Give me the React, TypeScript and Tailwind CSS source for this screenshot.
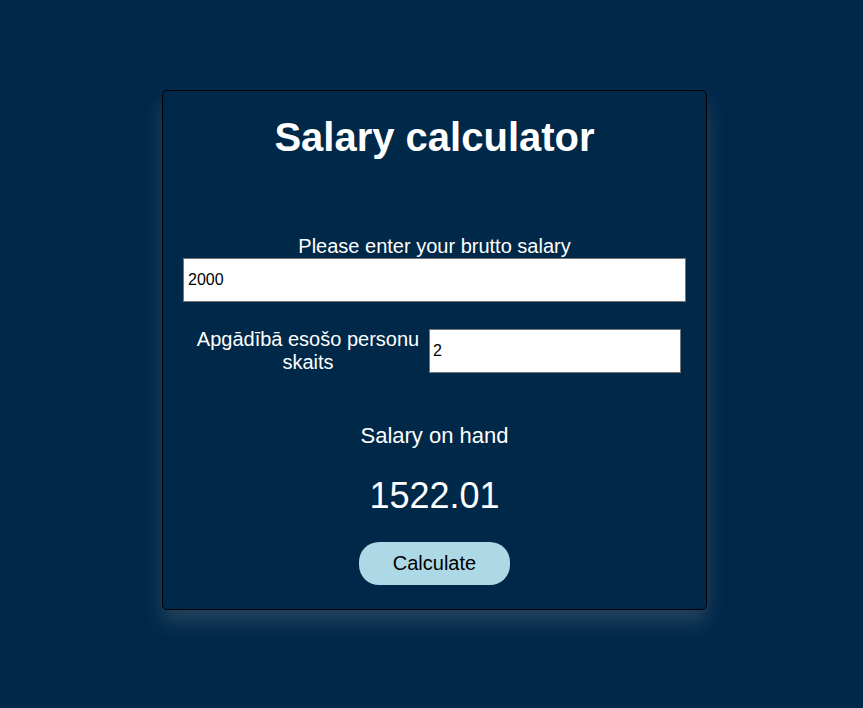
import React from "react";

export default function App() {
  return (
    <div
      className="w-[863px] h-[708px] bg-[#002849] pt-[90px] pl-[162px]"
      style={{ fontFamily: '"Liberation Sans", Arial, sans-serif' }}
    >
      <div className="w-[545px] h-[520px] border border-black rounded-[5px] bg-[#002849] shadow-[0_12px_20px_rgba(140,150,160,0.25)] px-[20px] flex flex-col items-center text-white">
        <h1 className="mt-[24px] text-[40px] leading-[normal] font-bold">Salary calculator</h1>
        <label className="mt-[75px] text-[20px] leading-[normal]">Please enter your brutto salary</label>
        <input
          readOnly
          value="2000"
          className="w-[503px] h-[44px] bg-white border border-[#767676] text-black text-[16px] px-[4px] outline-none"
        />
        <div className="mt-[26px] flex items-center w-[503px]">
          <div className="ml-[5px] w-[240px] text-center text-[20px] leading-[normal]">
            Apgādībā esošo personu skaits
          </div>
          <input
            readOnly
            value="2"
            className="ml-[1px] w-[252px] h-[44px] bg-white border border-[#767676] text-black text-[16px] px-[3px] outline-none"
          />
        </div>
        <div className="mt-[49px] text-[22px] leading-[normal]">Salary on hand</div>
        <div className="mt-[26px] text-[36px] leading-[normal]">1522.01</div>
        <button className="mt-[25px] w-[151px] h-[43px] rounded-[20px] bg-[#add8e6] text-black text-[20px] leading-[normal]">
          Calculate
        </button>
      </div>
    </div>
  );
}
